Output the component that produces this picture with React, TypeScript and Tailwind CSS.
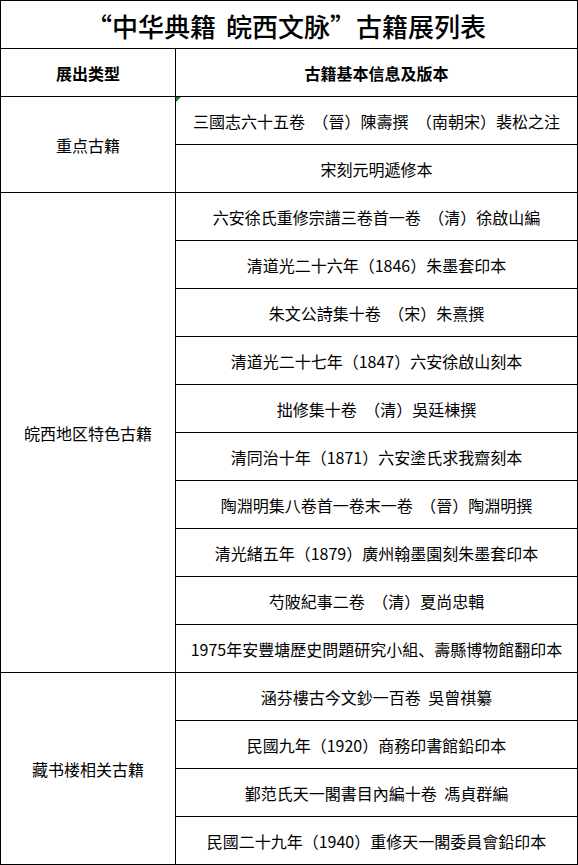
const groups: { type: string; items: string[] }[] = [
  {
    type: "重点古籍",
    items: ["三國志六十五卷 （晉）陳壽撰 （南朝宋）裴松之注", "宋刻元明遞修本"],
  },
  {
    type: "皖西地区特色古籍",
    items: [
      "六安徐氏重修宗譜三卷首一卷 （清）徐啟山編",
      "清道光二十六年（1846）朱墨套印本",
      "朱文公詩集十卷 （宋）朱熹撰",
      "清道光二十七年（1847）六安徐啟山刻本",
      "拙修集十卷 （清）吳廷棟撰",
      "清同治十年（1871）六安塗氏求我齋刻本",
      "陶淵明集八卷首一卷末一卷 （晉）陶淵明撰",
      "清光緒五年（1879）廣州翰墨園刻朱墨套印本",
      "芍陂紀事二卷 （清）夏尚忠輯",
      "1975年安豐塘歷史問題研究小組、壽縣博物館翻印本",
    ],
  },
  {
    type: "藏书楼相关古籍",
    items: [
      "涵芬樓古今文鈔一百卷 吳曾祺纂",
      "民國九年（1920）商務印書館鉛印本",
      "鄞范氏天一閣書目內編十卷 馮貞群編",
      "民國二十九年（1940）重修天一閣委員會鉛印本",
    ],
  },
];

const rowSpan: Record<number, string> = {
  2: "row-span-2",
  4: "row-span-4",
  10: "row-span-10",
};

export default function App() {
  return (
    <div className="w-[578px] bg-white text-black font-['Noto_Sans_CJK_SC','Noto_Sans',sans-serif]">
      <div className="grid grid-cols-[175px_402px] auto-rows-[48px] border-t border-l border-black">
        <div className="col-span-2 flex items-center justify-center border-r border-b border-black pt-[3px] pr-[6px] text-[26px] font-medium leading-none">
          <span className="whitespace-pre [word-spacing:4px]">
            <span className="[font-feature-settings:'fwid']">“</span>中华典籍 皖西文脉<span className="[font-feature-settings:'fwid']">”</span>古籍展列表
          </span>
        </div>
        <div className="flex items-center justify-center border-r border-b border-black text-[16px] font-bold">
          展出类型
        </div>
        <div className="flex items-center justify-center border-r border-b border-black text-[16px] font-bold">
          古籍基本信息及版本
        </div>
        {groups.map((g, gi) => (
          <div key={g.type} className="contents">
            <div
              className={`${rowSpan[g.items.length]} flex items-center justify-center border-r border-b border-black text-[16px]`}
            >
              {g.type}
            </div>
            {g.items.map((item, i) => (
              <div
                key={item}
                className="relative flex items-center justify-center whitespace-pre border-r border-b border-black text-[16px] [word-spacing:4px]"
              >
                {gi === 0 && i === 0 ? (
                  <span className="absolute left-0 top-0 h-0 w-0 border-t-[5px] border-r-[5px] border-t-[#1e7b34] border-r-transparent" />
                ) : null}
                {item}
              </div>
            ))}
          </div>
        ))}
      </div>
    </div>
  );
}
